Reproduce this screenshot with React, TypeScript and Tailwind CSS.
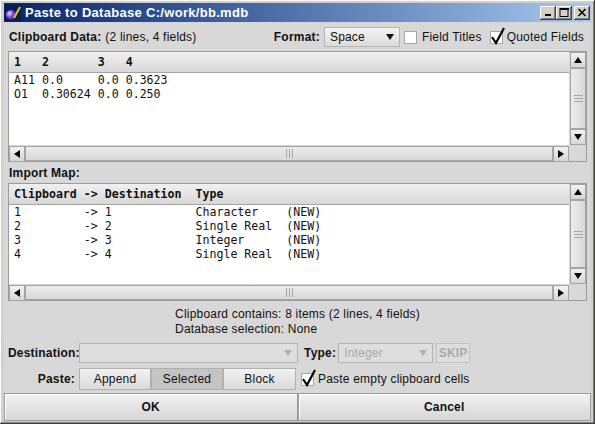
import React from "react";

const raised =
    "shadow-[inset_-1px_-1px_#404040,inset_1px_1px_#ffffff,inset_-2px_-2px_#808080,inset_2px_2px_#d4d0c8]";

const TitleIcon = () => (
    <svg width="16" height="16" viewBox="0 0 16 16">
        <rect width="16" height="16" fill="#06204a" />
        <defs>
            <radialGradient id="orb" cx="0.35" cy="0.35" r="0.7">
                <stop offset="0" stopColor="#e8d8ff" />
                <stop offset="0.45" stopColor="#8a5ad8" />
                <stop offset="1" stopColor="#3a1470" />
            </radialGradient>
        </defs>
        <circle cx="6" cy="10" r="5" fill="url(#orb)" />
        <path d="M9 13 L15 2" stroke="#e8c020" strokeWidth="2" />
    </svg>
);

const WinBtn = ({ kind }: { kind: "min" | "max" | "close" }) => (
    <div className={`flex h-[14px] w-[16px] items-center justify-center bg-[#d4d0c8] ${raised}`}>
        <svg width="10" height="9" viewBox="0 0 10 9">
            {kind === "min" && <rect x="2" y="6" width="6" height="2" fill="#000" />}
            {kind === "max" && (
                <>
                    <rect x="1" y="0.5" width="8" height="8" fill="none" stroke="#000" />
                    <rect x="1" y="0" width="9" height="2" fill="#000" />
                </>
            )}
            {kind === "close" && (
                <path d="M1.5 1 L8.5 8 M8.5 1 L1.5 8" stroke="#000" strokeWidth="1.6" />
            )}
        </svg>
    </div>
);

const Check = ({ checked }: { checked?: boolean }) => (
    <div className="relative h-[13px] w-[13px] border border-[#a8a8a8] bg-white">
        {checked && (
            <svg className="absolute left-[-1px] top-[-5px]" width="16" height="18" viewBox="0 0 16 18">
                <path d="M2 10 L6 16 L14 1" fill="none" stroke="#000" strokeWidth="2.2" />
            </svg>
        )}
    </div>
);

const Arrow = ({ dir, color = "#000" }: { dir: "up" | "down" | "left" | "right"; color?: string }) => {
    const d = {
        up: "M0 7 L4 1 L8 7 Z",
        down: "M0 1 L8 1 L4 7 Z",
        left: "M7 0 L7 8 L1 4 Z",
        right: "M1 0 L1 8 L7 4 Z",
    }[dir];
    return (
        <svg width="8" height="8" viewBox="0 0 8 8">
            <path d={d} fill={color} />
        </svg>
    );
};

const ScrollBtn = ({ dir }: { dir: "up" | "down" | "left" | "right" }) => (
    <div className="flex h-[16px] w-[16px] shrink-0 items-center justify-center border border-[#a4a4a4] bg-gradient-to-b from-[#f2f2f2] to-[#d6d6d6]">
        <Arrow dir={dir} />
    </div>
);

const VScroll = () => (
    <div className="flex h-full flex-col">
        <ScrollBtn dir="up" />
        <div className="flex flex-1 items-center justify-center border border-[#a4a4a4] bg-gradient-to-r from-[#ececec] to-[#d8d8d8]">
            <div className="flex flex-col gap-[2px]">
                <div className="h-px w-[9px] bg-[#a8a8a8]" />
                <div className="h-px w-[9px] bg-[#a8a8a8]" />
                <div className="h-px w-[9px] bg-[#a8a8a8]" />
            </div>
        </div>
        <ScrollBtn dir="down" />
    </div>
);

const HScroll = () => (
    <div className="flex h-full">
        <ScrollBtn dir="left" />
        <div className="flex flex-1 items-center justify-center border border-[#a4a4a4] bg-gradient-to-b from-[#ececec] to-[#d8d8d8]">
            <div className="flex gap-[2px]">
                <div className="h-[9px] w-px bg-[#a8a8a8]" />
                <div className="h-[9px] w-px bg-[#a8a8a8]" />
                <div className="h-[9px] w-px bg-[#a8a8a8]" />
            </div>
        </div>
        <ScrollBtn dir="right" />
    </div>
);

const mono = "font-['DejaVu_Sans_Mono',monospace] text-[11.6px] leading-[14px] tracking-normal whitespace-pre";

const Pane = ({ height, header, rows }: { height: string; header: string; rows: string[] }) => (
    <div className={`grid ${height} grid-cols-[1fr_17px] grid-rows-[1fr_16px] border border-[#9c9c9c] bg-[#d8d8d8]`}>
        <div className="flex flex-col bg-white">
            <div className="flex h-[21px] items-center border-b border-[#a4a4a4] bg-gradient-to-b from-[#f0f0f0] to-[#d8d8d8] pl-[5px]">
                <span className={`${mono} font-bold text-[#111]`}>{header}</span>
            </div>
            <div className="flex flex-col pl-[5px]">
                {rows.map((r, i) => (
                    <span key={i} className={`${mono} text-[#111]`}>
                        {r}
                    </span>
                ))}
            </div>
        </div>
        <div className="pl-px">
            <VScroll />
        </div>
        <div className="pt-px">
            <HScroll />
        </div>
        <div />
    </div>
);

const Combo = ({ value, width, disabled }: { value: string; width: string; disabled?: boolean }) => (
    <div
        className={`flex h-[20px] ${width} items-center justify-between border border-[#b4b4b4] pl-[5px] pr-[5px] ${
            disabled ? "bg-[#dedede] text-[#a8a8a8]" : "bg-gradient-to-b from-[#f4f4f4] to-[#dcdcdc] text-[#111]"
        }`}
    >
        <span>{value}</span>
        <svg width="8" height="6" viewBox="0 0 8 6">
            <path d="M0 0 L8 0 L4 6 Z" fill={disabled ? "#b0b0b0" : "#111"} />
        </svg>
    </div>
);

const SegBtn = ({ label, width, pressed }: { label: string; width: string; pressed?: boolean }) => (
    <div
        className={`flex h-[22px] ${width} items-center justify-center border border-[#b0b0b0] ${
            pressed ? "bg-[#c4c4c4]" : "bg-gradient-to-b from-[#f2f2f2] to-[#dadada]"
        }`}
    >
        {label}
    </div>
);

export default function App() {
    return (
        <div
            className={`flex h-[424px] w-[595px] flex-col bg-[#d4d0c8] px-[4px] py-[3px] font-['Liberation_Sans',Arial,sans-serif] text-[12px] tracking-[0.2px] text-[#111] ${raised}`}
        >
            <div className="flex h-[19px] shrink-0 items-center bg-gradient-to-r from-[#0a246a] to-[#a6caf0] pl-[1px] pr-[1px]">
                <TitleIcon />
                <span className="ml-[4px] text-[13px] font-bold tracking-[0.3px] text-white">
                    Paste to Database C:/work/bb.mdb
                </span>
                <div className="ml-auto flex items-center">
                    <WinBtn kind="min" />
                    <WinBtn kind="max" />
                    <div className="w-[2px]" />
                    <WinBtn kind="close" />
                </div>
            </div>

            <div className="flex flex-1 flex-col bg-[#d8d8d8]">
                <div className="flex flex-col px-[4px]">
                    <div className="mt-[5px] flex h-[20px] items-center pl-[1px]">
                        <span className="font-bold">Clipboard Data:</span>
                        <span className="ml-[4px]">(2 lines, 4 fields)</span>
                        <span className="ml-auto font-bold">Format:</span>
                        <div className="ml-[4px]">
                            <Combo value="Space" width="w-[76px]" />
                        </div>
                        <div className="ml-[4px]">
                            <Check />
                        </div>
                        <span className="ml-[5px]">Field Titles</span>
                        <div className="ml-[8px]">
                            <Check checked />
                        </div>
                        <span className="ml-[4px] mr-[3px]">Quoted Fields</span>
                    </div>

                    <div className="mt-[4px]">
                        <Pane
                            height="h-[111px]"
                            header={"1   2       3   4"}
                            rows={["A11 0.0     0.0 0.3623", "O1  0.30624 0.0 0.250"]}
                        />
                    </div>

                    <div className="flex h-[21px] items-center pl-[1px] font-bold">Import Map:</div>

                    <Pane
                        height="h-[118px]"
                        header={"Clipboard -> Destination  Type"}
                        rows={[
                            "1         -> 1            Character    (NEW)",
                            "2         -> 2            Single Real  (NEW)",
                            "3         -> 3            Integer      (NEW)",
                            "4         -> 4            Single Real  (NEW)",
                        ]}
                    />

                    <div className="flex justify-center pt-[6px] leading-[15px]">
                        <div className="flex flex-col">
                            <span>Clipboard contains: 8 items (2 lines, 4 fields)</span>
                            <span>Database selection: None</span>
                        </div>
                    </div>

                    <div className="mt-[6px] flex h-[20px] items-center">
                        <span className="w-[67px] text-right font-bold">Destination:</span>
                        <div className="ml-[4px]">
                            <Combo value="" width="w-[219px]" disabled />
                        </div>
                        <span className="ml-[6px] font-bold">Type:</span>
                        <div className="ml-[2px]">
                            <Combo value="Integer" width="w-[95px]" disabled />
                        </div>
                        <div className="ml-[3px] flex h-[20px] w-[34px] items-center justify-center border border-[#c0c0c0] bg-[#dedede] font-bold text-[#aaaaaa]">
                            SKIP
                        </div>
                    </div>

                    <div className="mt-[5px] flex h-[22px] items-center">
                        <span className="w-[67px] text-right font-bold">Paste:</span>
                        <div className="ml-[4px] flex">
                            <SegBtn label="Append" width="w-[72px]" />
                            <SegBtn label="Selected" width="w-[72px]" pressed />
                            <SegBtn label="Block" width="w-[73px]" />
                        </div>
                        <div className="ml-[5px]">
                            <Check checked />
                        </div>
                        <span className="ml-[4px]">Paste empty clipboard cells</span>
                    </div>
                </div>

                <div className="mt-[3px] flex h-[28px]">
                    <div className="flex flex-1 items-center justify-center border border-[#9c9c9c] bg-gradient-to-b from-[#f2f2f2] to-[#d6d6d6] font-bold shadow-[inset_1px_1px_#ffffff]">
                        OK
                    </div>
                    <div className="flex flex-1 items-center justify-center border border-[#9c9c9c] bg-gradient-to-b from-[#f2f2f2] to-[#d6d6d6] font-bold shadow-[inset_1px_1px_#ffffff]">
                        Cancel
                    </div>
                </div>
            </div>
        </div>
    );
}
